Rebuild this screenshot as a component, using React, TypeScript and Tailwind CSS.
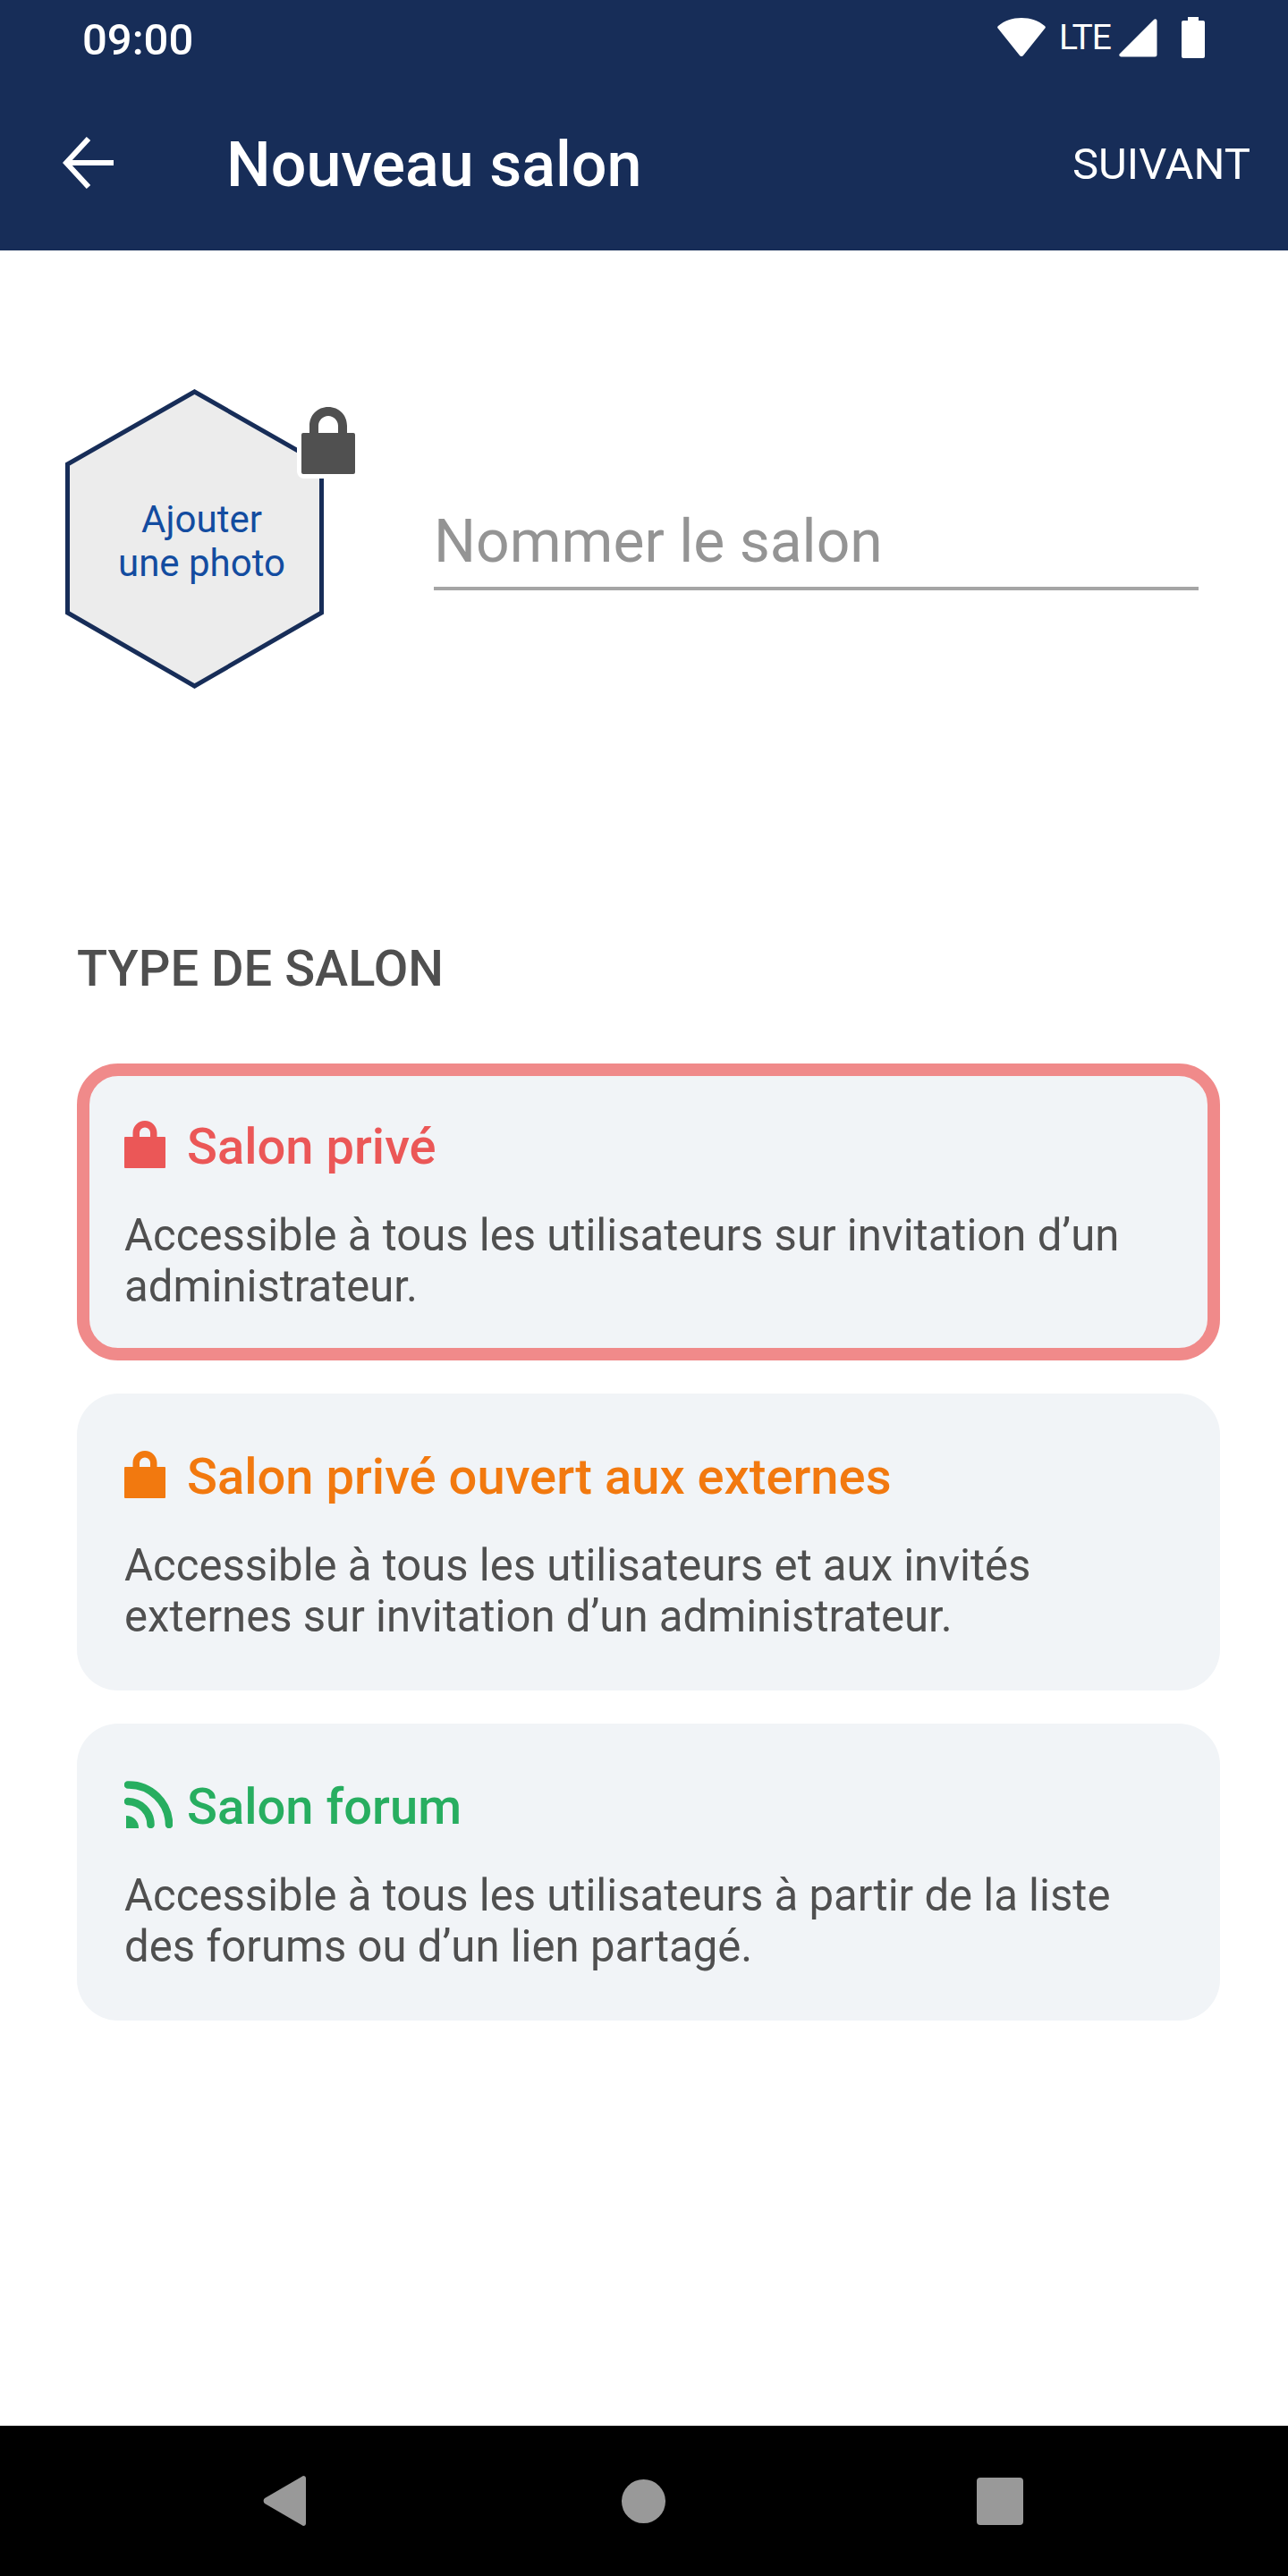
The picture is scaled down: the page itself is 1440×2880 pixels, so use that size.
const roboto = "font-['Roboto',sans-serif]";

function LockIcon({ color }: { color: string }) {
  return (
    <svg width="46" height="53" viewBox="0 0 46 53" className="shrink-0">
      <path fill={color} fillRule="evenodd" d="M9.5 18V13.500C9.500 6 15.500 0 23 0s13.500 6 13.500 13.500V18H45a1 1 0 0 1 1 1v33a1 1 0 0 1-1 1H1a1 1 0 0 1-1-1V19a1 1 0 0 1 1-1zM17 18h12V13.500a6 6 0 0 0-12 0z" />
    </svg>
  );
}

function RssIcon({ color }: { color: string }) {
  return (
    <svg width="54" height="53" viewBox="0 0 54 53" className="shrink-0">
      <path d="M2 39a13.500 13.500 0 0 1 14 14H2z" fill={color} />
      <path d="M4 23a26 26 0 0 1 25.500 26" fill="none" stroke={color} strokeWidth="8.500" strokeLinecap="round" />
      <path d="M4 4.500A45 45 0 0 1 50 49" fill="none" stroke={color} strokeWidth="8.500" strokeLinecap="round" />
    </svg>
  );
}

function Card({ icon, title, color, desc, selected }: { icon: React.ReactNode; title: string; color: string; desc: React.ReactNode; selected?: boolean }) {
  return (
    <div className={selected ? "h-[332px] rounded-[46px] bg-[#f1f4f7] border-[14px] border-[#f08a8a] pl-[39px] pt-[46px]" : "h-[332px] rounded-[46px] bg-[#f1f4f7] pl-[53px] pt-[60px]"}>
      <div className="flex items-center h-[66px] gap-[24px]">
        <span className="-mt-[5px] w-[46px] flex justify-start">{icon}</span>
        <span className="text-[56.1px] leading-[66px] font-medium whitespace-nowrap" style={{ color }}>{title}</span>
      </div>
      <p className="mt-[38px] text-[49.1px] leading-[57px] text-[#4f4f4f] whitespace-nowrap">{desc}</p>
    </div>
  );
}

export default function App() {
  return (
    <div className={`${roboto} w-[1440px] h-[2880px] bg-white flex flex-col overflow-hidden`}>
      <header className="h-[280px] bg-[#172d58] text-white shrink-0">
        <div className="h-[84px] pl-[92px] pr-[93px] flex items-center justify-between">
          <span className="mt-[4px] text-[49px] leading-[57px] font-medium">09:00</span>
          <div className="flex items-center">
            <svg width="54" height="44" viewBox="0 0 54 44"><path fill="#fff" d="M27 0C17 0 8 3 1 9a2 2 0 0 0 0 3l24 30a2.500 2.500 0 0 0 4 0l24-30a2 2 0 0 0 0-3C46 3 37 0 27 0z" /></svg>
            <span className="ml-[15px] w-[56px] text-[39px] leading-[50px] tracking-[-1.2px] whitespace-nowrap">LTE</span>
            <svg className="ml-[11px]" width="43" height="43" viewBox="0 0 43 43"><path fill="#fff" d="M39 1 1 39c-1.500 1.500-.5 3.500 1.500 3.500H40a2.500 2.500 0 0 0 2.500-2.500V2.500C42.500 .5 40.500-.5 39 1z" /></svg>
            <svg className="ml-[27px]" width="26" height="46" viewBox="0 0 26 46"><path fill="#fff" d="M7 0h12v4h5a2 2 0 0 1 2 2v38a2 2 0 0 1-2 2H2a2 2 0 0 1-2-2V6a2 2 0 0 1 2-2h5z" /></svg>
          </div>
        </div>
        <div className="h-[196px] pl-[70px] pr-[42px] flex items-center">
          <svg width="58" height="58" viewBox="0 0 58 58" className="shrink-0">
            <path d="M57 29H5M29 2 4 29l25 27" fill="none" stroke="#fff" strokeWidth="6" />
          </svg>
          <span className="ml-[125px] mt-[4px] text-[70px] leading-[80px] font-medium">Nouveau salon</span>
          <span className="ml-auto mt-[2px] text-[49px] leading-[57px]">SUIVANT</span>
        </div>
      </header>

      <main className="flex-1 pl-[86px] pr-[76px]">
        <div className="flex items-start mt-[154px] -ml-[14px]">
          <div className="relative w-[292px] h-[336px] shrink-0">
            <svg width="292" height="336" viewBox="0 0 292 336" className="absolute inset-0">
              <path d="M145.500 4 287.500 85v166l-142 82-142-82V85z" fill="#ececec" stroke="#172d58" strokeWidth="5" />
            </svg>
            <div className="absolute inset-0 flex flex-col items-center pt-[122px] pl-[15px] text-[42px] leading-[49px] text-[#134ca0]">
              <span>Ajouter</span>
              <span>une photo</span>
            </div>
            <div className="absolute left-[260px] top-[19px] w-[70px] h-[82px] bg-white rounded-[8px] flex items-end justify-center pb-[5px]">
              <svg width="60" height="75" viewBox="0 0 60 75">
                <path fill="#505050" fillRule="evenodd" d="M2 29h7V21C9 9 18 0 30 0s21 9 21 21v8h7a2 2 0 0 1 2 2v42a2 2 0 0 1-2 2H2a2 2 0 0 1-2-2V31a2 2 0 0 1 2-2zM19 29h22V21c0-6-5-11-11-11s-11 5-11 11z" />
              </svg>
            </div>
          </div>
          <div className="ml-[121px] mt-[135px] w-[855px] h-[91px] border-b-[4px] border-[#a5a5a5]">
            <span className="text-[66px] leading-[74px] text-[#949494]">Nommer le salon</span>
          </div>
        </div>

        <h2 className="mt-[280px] text-[56px] leading-[66px] font-medium text-[#4f4f4f]">TYPE DE SALON</h2>

        <div className="mt-[73px] flex flex-col gap-[37px]">
          <Card selected color="#eb5757" icon={<LockIcon color="#eb5757" />} title="Salon privé" desc={<>Accessible à tous les utilisateurs sur invitation d’un<br />administrateur.</>} />
          <Card color="#f2790f" icon={<LockIcon color="#f2790f" />} title="Salon privé ouvert aux externes" desc={<>Accessible à tous les utilisateurs et aux invités<br />externes sur invitation d’un administrateur.</>} />
          <Card color="#27ae60" icon={<RssIcon color="#27ae60" />} title="Salon forum" desc={<>Accessible à tous les utilisateurs à partir de la liste<br />des forums ou d’un lien partagé.</>} />
        </div>
      </main>

      <nav className="h-[168px] bg-black shrink-0 flex items-center justify-between pl-[294px] pr-[296px]">
        <svg width="48" height="56" viewBox="0 0 48 56"><path fill="#999" d="M45 0a3 3 0 0 1 3 3v50a3 3 0 0 1-3 3L2 31a4 4 0 0 1 0-6z" /></svg>
        <div className="ml-[5px] w-[49px] h-[49px] rounded-full bg-[#999]" />
        <div className="w-[52px] h-[53px] rounded-[4px] bg-[#999]" />
      </nav>
    </div>
  );
}
